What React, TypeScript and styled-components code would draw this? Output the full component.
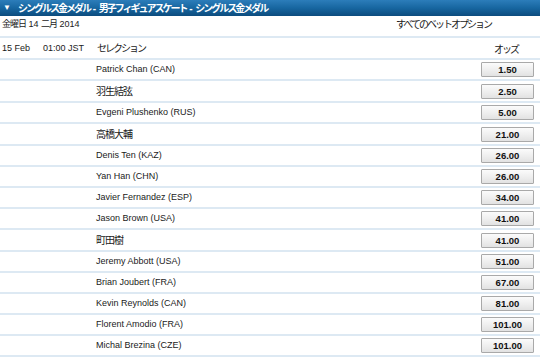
import React from 'react';
import styled, { createGlobalStyle } from 'styled-components';

const GlobalStyle = createGlobalStyle`
  html, body {
    margin: 0;
    padding: 0;
    background: #ffffff;
  }
  body {
    font-family: "Liberation Sans", Arial, "Noto Sans CJK JP", sans-serif;
    font-size: 9px;
    line-height: 13px;
    color: #1a1a1a;
  }
`;

const Page = styled.div`
  width: 540px;
  height: 358px;
  overflow: hidden;
`;

// Japanese text is set tighter than the Latin text in the reference
const Jp = styled.span<{ $size?: number; $track?: number }>`
  font-family: "Noto Sans CJK JP", sans-serif;
  font-size: ${p => p.$size ?? 10}px;
  letter-spacing: ${p => p.$track ?? -2}px;
  line-height: 13px;
`;

const TitleBar = styled.div`
  height: 16px;
  display: flex;
  align-items: center;
  gap: 7px;
  padding: 0 3px;
  background: linear-gradient(to bottom, #2c7dba 0%, #1766a0 50%, #0c4c7e 100%);
  color: #ffffff;
  font-weight: bold;
  font-size: 10px;
  white-space: nowrap;
`;

const Arrow = styled.span`
  font-size: 8px;
  line-height: 1;
`;

const InfoRow = styled.div`
  display: flex;
  align-items: flex-start;
  padding: 1px 2px 0;
  box-sizing: border-box;
  border-bottom: 2px solid #dde9f3;
  height: 22px;
`;

const DateText = styled.div`
  flex: 1;
`;

const AllBets = styled.div`
  width: 142px;
`;

const HeadRow = styled.div`
  height: 20px;
  display: flex;
  align-items: center;
  padding: 0 2px;
  border-bottom: 2px solid #dde9f3;
`;

const DateCol = styled.div`
  width: 41px;
`;

const TimeCol = styled.div`
  width: 54px;
`;

const NameCol = styled.div`
  flex: 1;
  white-space: nowrap;
`;

const OddsCol = styled.div`
  width: 54px;
  margin-right: 5px;
  display: flex;
  justify-content: center;
`;

const Row = styled.div<{ $tall?: boolean }>`
  height: ${p => (p.$tall ? 20 : 19)}px;
  display: flex;
  align-items: center;
  padding: 0 2px;
  border-bottom: 2px solid #dde9f3;
`;

const Spacer = styled.div`
  width: 94px;
`;

const OddsButton = styled.button`
  width: 53px;
  height: 15px;
  padding: 0;
  margin-right: 4px;
  border: 1px solid #a9a9a9;
  border-radius: 1px;
  background: linear-gradient(to bottom, #fbfbfb 0%, #eeeeee 55%, #e2e2e2 100%);
  font-family: "Liberation Sans", Arial, sans-serif;
  font-size: 9.5px;
  font-weight: bold;
  color: #111111;
  line-height: 13px;
  text-align: center;
  cursor: pointer;
`;

const runners: { name: string; odds: string; jp?: boolean }[] = [
  { name: 'Patrick Chan (CAN)', odds: '1.50' },
  { name: '羽生結弦', odds: '2.50', jp: true },
  { name: 'Evgeni Plushenko (RUS)', odds: '5.00' },
  { name: '高橋大輔', odds: '21.00', jp: true },
  { name: 'Denis Ten (KAZ)', odds: '26.00' },
  { name: 'Yan Han (CHN)', odds: '26.00' },
  { name: 'Javier Fernandez (ESP)', odds: '34.00' },
  { name: 'Jason Brown (USA)', odds: '41.00' },
  { name: '町田樹', odds: '41.00', jp: true },
  { name: 'Jeremy Abbott (USA)', odds: '51.00' },
  { name: 'Brian Joubert (FRA)', odds: '67.00' },
  { name: 'Kevin Reynolds (CAN)', odds: '81.00' },
  { name: 'Florent Amodio (FRA)', odds: '101.00' },
  { name: 'Michal Brezina (CZE)', odds: '101.00' },
];

const App: React.FC = () => {
  return (
    <Page>
      <GlobalStyle />
      <TitleBar>
        <Arrow>▼</Arrow>
        <span>
          <Jp>シングルス金メダル</Jp> - <Jp>男子フィギュアスケート</Jp> - <Jp>シングルス金メダル</Jp>
        </span>
      </TitleBar>
      <InfoRow>
        <DateText>
          <Jp $size={9} $track={-1}>金曜日</Jp> 14 <Jp $size={9} $track={-1}>二月</Jp> 2014
        </DateText>
        <AllBets>
          <Jp>すべてのベットオプション</Jp>
        </AllBets>
      </InfoRow>
      <HeadRow>
        <DateCol>15 Feb</DateCol>
        <TimeCol>01:00 JST</TimeCol>
        <NameCol>
          <Jp>セレクション</Jp>
        </NameCol>
        <OddsCol>
          <Jp>オッズ</Jp>
        </OddsCol>
      </HeadRow>
      {runners.map(r => (
        <Row key={r.name} $tall={r.jp}>
          <Spacer />
          <NameCol>
            {r.jp ? (
              <Jp $size={10} $track={-1}>
                {r.name}
              </Jp>
            ) : (
              r.name
            )}
          </NameCol>
          <OddsButton>{r.odds}</OddsButton>
        </Row>
      ))}
    </Page>
  );
};

export default App;
